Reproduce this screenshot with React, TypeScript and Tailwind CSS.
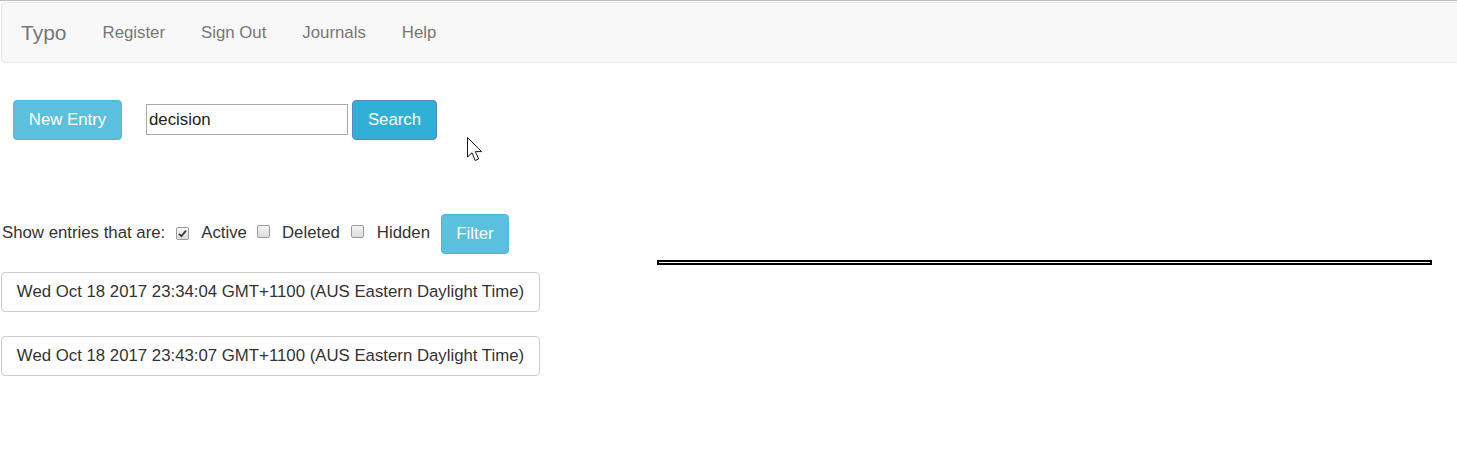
import React from "react";

type Entry = { id: number; created: string };

const entries: Entry[] = [
  { id: 1, created: "Wed Oct 18 2017 23:34:04 GMT+1100 (AUS Eastern Daylight Time)" },
  { id: 2, created: "Wed Oct 18 2017 23:43:07 GMT+1100 (AUS Eastern Daylight Time)" },
];

const Checkbox: React.FC<{ checked?: boolean }> = ({ checked }) => (
  <span className="inline-flex h-[13px] w-[13px] items-center justify-center rounded-[2px] border border-[#9a9a9a] bg-gradient-to-b from-[#f4f4f4] to-[#dcdcdc]">
    {checked && (
      <svg width="9" height="9" viewBox="0 0 9 9">
        <path d="M1 4.8 L3.4 7.2 L8 1.6" fill="none" stroke="#3a3a3a" strokeWidth="1.8" />
      </svg>
    )}
  </span>
);

const Cursor = () => (
  <svg
    className="absolute left-[466px] top-[136px]"
    width="20"
    height="28"
    viewBox="0 0 20 28"
  >
    <path
      d="M1.5 1.5 L1.5 21 L6 16.8 L9.2 24.5 L12.6 23 L9.4 15.6 L15.6 15.6 Z"
      fill="#ffffff"
      stroke="#1a1a1a"
      strokeWidth="1"
      strokeLinejoin="miter"
    />
  </svg>
);

export default function App() {
  const navLinks = ["Register", "Sign Out", "Journals", "Help"];

  return (
    <div className="relative h-[458px] w-full overflow-hidden bg-white font-['Liberation_Sans',Arial,sans-serif] text-[16.8px] text-[#333]">
      <div className="h-px w-full bg-[#bdbdbd]" />

      {/* Navbar */}
      <nav className="ml-px mt-px flex h-[61px] w-[calc(100%+10px)] items-center rounded-[4px] border border-[#e7e7e7] bg-[#f8f8f8]">
        <span className="pl-[19px] pr-[18px] text-[21px] text-[#777]">Typo</span>
        {navLinks.map((link) => (
          <a key={link} className="px-[18px] text-[16.8px] text-[#777]">
            {link}
          </a>
        ))}
      </nav>

      {/* Toolbar */}
      <div className="ml-[13px] mt-[37px] flex items-start">
        <button className="h-[40px] w-[109px] rounded-[4px] border border-[#46b8da] bg-[#5bc0de] text-white">
          New Entry
        </button>
        <input
          className="ml-[24px] mt-[4px] h-[31px] w-[202px] border border-[#a9a9a9] px-[2px] text-[16.8px] text-[#222] outline-none"
          defaultValue="decision"
        />
        <button className="ml-[4px] h-[40px] w-[85px] rounded-[4px] border border-[#5b82d6] bg-[#31b0d5] text-white">
          Search
        </button>
      </div>

      {/* Filters, entries and rule */}
      <div className="ml-px mt-[74px] flex">
        <div className="flex w-[540px] flex-col">
          <div className="flex h-[40px] items-center">
            <span className="ml-px -mt-[3px]">Show entries that are:</span>
            <span className="ml-[11px] -mt-[3px]">
              <Checkbox checked />
            </span>
            <span className="ml-[12px] -mt-[3px]">Active</span>
            <span className="ml-[10px] -mt-[3px]">
              <Checkbox />
            </span>
            <span className="ml-[12px] -mt-[3px]">Deleted</span>
            <span className="ml-[11px] -mt-[3px]">
              <Checkbox />
            </span>
            <span className="ml-[13px] -mt-[3px]">Hidden</span>
            <button className="ml-[11px] h-[40px] w-[68px] rounded-[4px] border border-[#46b8da] bg-[#5bc0de] text-white">
              Filter
            </button>
          </div>

          <div className="mt-[18px] flex flex-col gap-[24px]">
            {entries.map((entry) => (
              <div
                key={entry.id}
                className="flex h-[40px] w-[539px] items-center justify-center rounded-[4px] border border-[#ccc] bg-white"
              >
                {entry.created}
              </div>
            ))}
          </div>
        </div>

        <div className="ml-[116px] mt-[46px] h-[5px] w-[775px] border-2 border-black bg-white" />
      </div>

      <Cursor />
    </div>
  );
}
